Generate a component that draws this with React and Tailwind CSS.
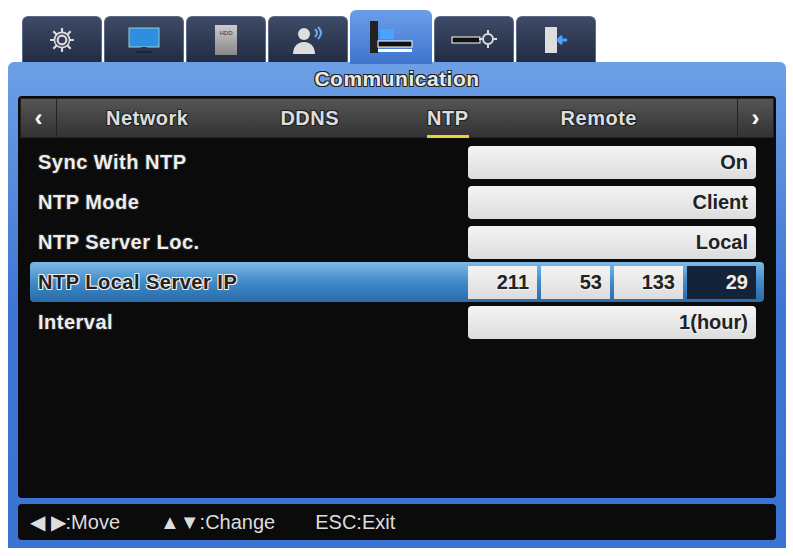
import React from 'react';

const outline = '[text-shadow:1px_1px_0_#222,-1px_-1px_0_#222,1px_-1px_0_#222,-1px_1px_0_#222]';
const outlineDark = '[text-shadow:1px_1px_0_#eee,-1px_-1px_0_#eee,1px_-1px_0_#eee,-1px_1px_0_#eee]';

const Tab = ({ active, children }) => (
  <div
    className={
      active
        ? 'w-[82px] h-[54px] -mb-[2px] rounded-t-md bg-gradient-to-b from-[#6c9ee8] to-[#3f74cf] flex items-center justify-center'
        : 'w-[80px] h-[46px] rounded-t-md bg-gradient-to-b from-[#3e4a66] to-[#232c44] border-t border-x border-[#5a6a8a] flex items-center justify-center'
    }
  >
    {children}
  </div>
);

const Row = ({ label, value }) => (
  <div className="flex items-center h-[40px] pl-[30px] pr-[30px]">
    <div className={`flex-1 text-[20px] font-bold tracking-[0.5px] text-[#eee] ${outline}`}>{label}</div>
    <div className="w-[288px] h-[33px] bg-gradient-to-b from-[#f4f4f4] to-[#dcdcdc] rounded-sm flex items-center justify-end pr-2">
      <span className={`text-[20px] font-bold text-[#222] ${outlineDark}`}>{value}</span>
    </div>
  </div>
);

export default function App() {
  return (
    <div className="w-[793px] h-[556px] bg-white relative" style={{ fontFamily: '"Liberation Sans", Arial, sans-serif' }}>
      <div className="flex items-end gap-[2px] pl-[22px] pt-[8px] h-[62px]">
        <Tab>
          <svg width="26" height="26" viewBox="0 0 24 24" fill="none" stroke="#ddd" strokeWidth="2">
            <circle cx="12" cy="12" r="4" />
            <circle cx="12" cy="12" r="7" strokeWidth="1.5" />
            <path d="M12 1v4M12 19v4M1 12h4M19 12h4M4 4l3 3M17 17l3 3M20 4l-3 3M7 17l-3 3" />
          </svg>
        </Tab>
        <Tab>
          <svg width="34" height="28" viewBox="0 0 34 28">
            <rect x="2" y="2" width="30" height="19" fill="#2e8fe0" stroke="#9cc" />
            <rect x="14" y="21" width="6" height="4" fill="#334" />
            <rect x="9" y="25" width="16" height="2" fill="#223" />
          </svg>
        </Tab>
        <Tab>
          <div className="w-[22px] h-[30px] bg-gradient-to-b from-[#ccc] to-[#888] text-[6px] text-[#333] pt-[4px] text-center">HDD</div>
        </Tab>
        <Tab>
          <svg width="30" height="28" viewBox="0 0 30 28">
            <circle cx="11" cy="8" r="6" fill="#ddd" />
            <path d="M0 28c0-8 5-12 11-12s11 4 11 12z" fill="#ddd" />
            <path d="M22 3q4 4 0 8M25 1q6 6 0 12" stroke="#6af" strokeWidth="2" fill="none" />
          </svg>
        </Tab>
        <Tab active>
          <svg width="50" height="36" viewBox="0 0 50 36">
            <rect x="4" y="2" width="8" height="32" fill="#222" />
            <rect x="14" y="10" width="14" height="10" fill="#4aa3ff" />
            <rect x="12" y="22" width="34" height="6" fill="#111" stroke="#fff" />
            <rect x="12" y="30" width="34" height="3" fill="#fff" />
          </svg>
        </Tab>
        <Tab>
          <svg width="48" height="26" viewBox="0 0 48 26">
            <rect x="2" y="10" width="28" height="6" fill="#111" stroke="#fff" />
            <circle cx="38" cy="12" r="5" fill="none" stroke="#ddd" strokeWidth="2" />
            <path d="M38 3v3M38 18v3M29 12h3M44 12h3" stroke="#ddd" strokeWidth="2" />
          </svg>
        </Tab>
        <Tab>
          <svg width="30" height="30" viewBox="0 0 30 30">
            <rect x="4" y="2" width="12" height="26" fill="#ddd" />
            <path d="M26 15h-8M21 11l-4 4 4 4" stroke="#4aa3ff" strokeWidth="3" fill="none" />
          </svg>
        </Tab>
      </div>
      <div className="mx-[8px] w-[778px] h-[486px] rounded-t-md bg-gradient-to-b from-[#6d9fe6] via-[#3f76d4] to-[#3a73d2] px-[10px] pb-[8px] flex flex-col">
        <div className={`h-[34px] flex items-center justify-center text-[21px] font-bold tracking-[0.5px] text-[#e8e8e8] ${outline}`}>Communication</div>
        <div className="flex-1 bg-[#0b0b0c] rounded-sm flex flex-col">
          <div className="h-[40px] mx-[2px] mt-[2px] bg-gradient-to-b from-[#555] to-[#333] flex items-center border border-[#222]">
            <div className="w-[36px] h-full flex items-center justify-center text-white text-[24px] font-bold border-r border-[#222]">‹</div>
            <div className={`flex-1 flex items-center text-[20px] font-bold tracking-[0.5px] text-[#ddd] ${outline}`}>
              <span className="ml-[49px]">Network</span>
              <span className="ml-[92px]">DDNS</span>
              <span className="ml-[88px] relative">NTP<span className="absolute left-0 right-0 -bottom-[5px] h-[3px] bg-[#e8d22c]" /></span>
              <span className="ml-[92px]">Remote</span>
            </div>
            <div className="w-[36px] h-full flex items-center justify-center text-white text-[24px] font-bold border-l border-[#222]">›</div>
          </div>
          <div className="pt-[4px] -mx-[10px]">
            <Row label="Sync With NTP" value="On" />
            <Row label="NTP Mode" value="Client" />
            <Row label="NTP Server Loc." value="Local" />
            <div className="flex items-center h-[40px] mx-[22px] pl-[8px] pr-[8px] bg-gradient-to-b from-[#7fb9e6] via-[#3f8bc8] to-[#2a6aa8] rounded-sm">
              <div className={`flex-1 text-[20px] font-bold tracking-[0.5px] text-[#222] ${outlineDark}`}>NTP Local Server IP</div>
              <div className="w-[288px] flex gap-[4px]">
                {['211', '53', '133'].map((v) => (
                  <div key={v} className="flex-1 h-[33px] bg-gradient-to-b from-[#f4f4f4] to-[#dcdcdc] flex items-center justify-end pr-2">
                    <span className={`text-[20px] font-bold text-[#222] ${outlineDark}`}>{v}</span>
                  </div>
                ))}
                <div className="flex-1 h-[33px] bg-[#14233a] flex items-center justify-end pr-2">
                  <span className={`text-[20px] font-bold text-[#eee] ${outline}`}>29</span>
                </div>
              </div>
            </div>
            <Row label="Interval" value="1(hour)" />
          </div>
        </div>
        <div className="h-[36px] mt-[6px] bg-[#0b0b0c] rounded-sm flex items-center pl-[12px] text-[20px] text-[#ddd]">
          <span>◀ ▶:Move</span>
          <span className="ml-[40px]">▲▼:Change</span>
          <span className="ml-[40px]">ESC:Exit</span>
        </div>
      </div>
    </div>
  );
}
